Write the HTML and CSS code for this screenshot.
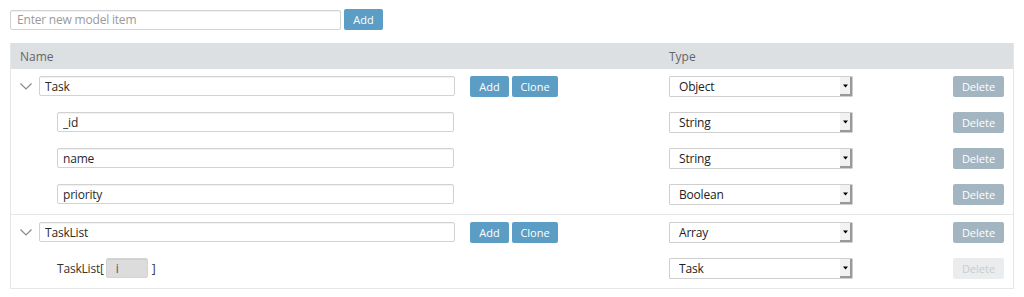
FILE: index.html
```html
<!DOCTYPE html>
<html lang="en">
<head>
  <meta charset="UTF-8" />
  <title>Model Editor</title>
  <link rel="stylesheet" href="styles.css">
</head>
<body>
  <div class="new-item">
    <input type="text" class="field new-field" placeholder="Enter new model item">
    <button class="btn btn-blue">Add</button>
  </div>

  <div class="model-table">
    <div class="table-head">
      <div class="col-name">Name</div>
      <div class="col-type">Type</div>
    </div>

    <!-- Task group -->
    <div class="group">
      <div class="row">
        <div class="col-name">
          <svg class="chevron" width="12" height="7" viewBox="0 0 12 7"><path d="M0.5 0.5 L6 6 L11.5 0.5" fill="none" stroke="#8a8a8a" stroke-width="1.2"/></svg>
          <input type="text" class="field parent-field" value="Task">
          <button class="btn btn-blue add-btn">Add</button>
          <button class="btn btn-blue clone-btn">Clone</button>
        </div>
        <div class="col-type">
          <select class="type-select"><option>Object</option></select>
        </div>
        <button class="btn btn-delete">Delete</button>
      </div>
      <div class="row">
        <div class="col-name child">
          <input type="text" class="field child-field" value="_id">
        </div>
        <div class="col-type">
          <select class="type-select"><option>String</option></select>
        </div>
        <button class="btn btn-delete">Delete</button>
      </div>
      <div class="row">
        <div class="col-name child">
          <input type="text" class="field child-field" value="name">
        </div>
        <div class="col-type">
          <select class="type-select"><option>String</option></select>
        </div>
        <button class="btn btn-delete">Delete</button>
      </div>
      <div class="row">
        <div class="col-name child">
          <input type="text" class="field child-field" value="priority">
        </div>
        <div class="col-type">
          <select class="type-select"><option>Boolean</option></select>
        </div>
        <button class="btn btn-delete">Delete</button>
      </div>
    </div>

    <!-- TaskList group -->
    <div class="group">
      <div class="row">
        <div class="col-name">
          <svg class="chevron" width="12" height="7" viewBox="0 0 12 7"><path d="M0.5 0.5 L6 6 L11.5 0.5" fill="none" stroke="#8a8a8a" stroke-width="1.2"/></svg>
          <input type="text" class="field parent-field" value="TaskList">
          <button class="btn btn-blue add-btn">Add</button>
          <button class="btn btn-blue clone-btn">Clone</button>
        </div>
        <div class="col-type">
          <select class="type-select"><option>Array</option></select>
        </div>
        <button class="btn btn-delete">Delete</button>
      </div>
      <div class="row">
        <div class="col-name child">
          <span class="index-label">TaskList[</span>
          <input type="text" class="field index-field" value="i" disabled>
          <span class="index-label">]</span>
        </div>
        <div class="col-type">
          <select class="type-select"><option>Task</option></select>
        </div>
        <button class="btn btn-delete" disabled>Delete</button>
      </div>
    </div>
  </div>
</body>
</html>
```

FILE: styles.css
```css
/* Global Reset */
* { margin: 0; padding: 0; box-sizing: border-box; }
body {
  font-family: 'Open Sans', 'Liberation Sans', sans-serif;
  font-size: 12px;
  color: #333;
  background: #fff;
  padding: 9px 10px 0 10px;
}
/* Text fields */
.field {
  height: 20px;
  border: 1px solid #d2d2d2;
  border-radius: 2px;
  box-shadow: inset 0 1px 1px rgba(0,0,0,0.06);
  padding: 0 5px;
  font-family: inherit;
  font-size: 12px;
  letter-spacing: -0.2px;
  color: #2a2a2a;
  background: #fff;
  outline: none;
}
.field::placeholder { color: #9a9a9a; }
/* Buttons */
.btn {
  height: 21px;
  border: none;
  border-radius: 2px;
  padding: 0 6px;
  font-family: inherit;
  font-size: 11px;
  color: #fff;
  cursor: pointer;
}
.btn-blue { background: #5b9dc4; }
.btn-delete {
  width: 51px;
  background: #a4b5c2;
  margin-left: auto;
  margin-right: 9px;
}
.btn-delete:disabled { background: #eaeced; color: #c9cccf; cursor: default; }
/* New item bar */
.new-item {
  display: flex;
  align-items: center;
  gap: 3px;
  margin-bottom: 13px;
}
.new-field { width: 331px; padding-left: 6px; }
.new-item .btn { width: 39px; }
/* Table */
.model-table {
  width: 1004px;
  border: 1px solid #e4e6e8;
  border-top: none;
}
.table-head {
  display: flex;
  align-items: center;
  height: 26px;
  background: #dde0e3;
  color: #666;
  font-size: 12px;
}
.table-head .col-name { padding-left: 9px; }
.group {
  padding: 7px 0 10px 0;
  display: flex;
  flex-direction: column;
  gap: 16px;
}
.group + .group { border-top: 1px solid #e4e6e8; }
.row {
  display: flex;
  align-items: center;
  height: 20px;
}
.col-name {
  width: 658px;
  display: flex;
  align-items: center;
  padding-left: 9px;
}
.col-name.child { padding-left: 46px; }
.col-type { width: 200px; }
.chevron { margin: 0 7px 0 0; }
.parent-field { width: 416px; }
.child-field { width: 397px; }
.add-btn { margin-left: 15px; margin-right: 3px; width: 39px; }
.clone-btn { width: 46px; }
.index-label { color: #333; letter-spacing: -0.2px; }
.index-field {
  width: 42px;
  margin: 0 4px 0 2px;
  background: #dcdcdc;
  border-color: #d4d4d4;
  color: #555;
  padding-left: 9px;
}
/* Type select */
.type-select {
  width: 184px;
  height: 21px;
  border: 1px solid #cfcfcf;
  border-radius: 1px;
  padding: 0 9px;
  font-family: inherit;
  font-size: 12px;
  letter-spacing: -0.2px;
  color: #222;
  -webkit-appearance: none;
  appearance: none;
  background: #fff url("data:image/svg+xml;utf8,<svg xmlns='http://www.w3.org/2000/svg' width='12' height='19'><rect x='0' y='0' width='12' height='19' fill='%23f2f2f2'/><rect x='10' y='0' width='2' height='19' fill='%23999'/><rect x='0' y='17' width='12' height='2' fill='%23999'/><polygon points='3,7.5 8,7.5 5.5,10.5' fill='%23000'/></svg>") no-repeat right 0 top 0;
  outline: none;
}
```
